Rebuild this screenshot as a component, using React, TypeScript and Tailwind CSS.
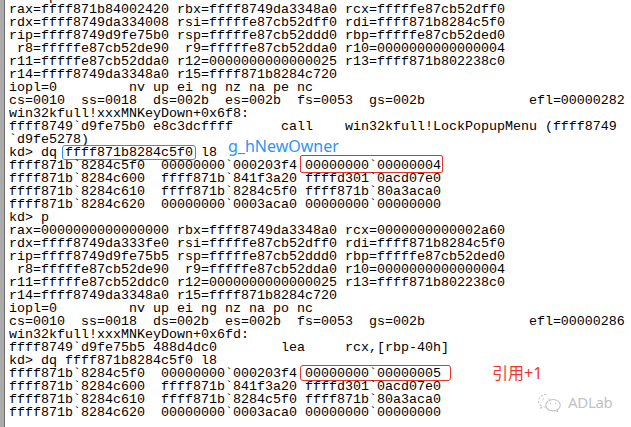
import React from "react";

const mono = { fontFamily: "'Liberation Mono', 'Courier New', monospace" };

const L = ({ children }: { children?: React.ReactNode }) => (
  <div className="relative h-[13px] leading-[13px] whitespace-pre text-black">{children}</div>
);

const regs1 = [
  "rax=ffff871b84002420 rbx=ffff8749da3348a0 rcx=fffffe87cb52dff0",
  "rdx=ffff8749da334008 rsi=fffffe87cb52dff0 rdi=ffff871b8284c5f0",
  "rip=ffff8749d9fe75b0 rsp=fffffe87cb52ddd0 rbp=fffffe87cb52ded0",
  " r8=fffffe87cb52de90  r9=fffffe87cb52dda0 r10=0000000000000004",
  "r11=fffffe87cb52dda0 r12=0000000000000025 r13=ffff871b802238c0",
  "r14=ffff8749da3348a0 r15=ffff871b8284c720",
  "iopl=0         nv up ei ng nz na pe nc",
  "cs=0010  ss=0018  ds=002b  es=002b  fs=0053  gs=002b             efl=00000282",
];

const regs2 = [
  "rax=0000000000000000 rbx=ffff8749da3348a0 rcx=0000000000002a60",
  "rdx=ffff8749da333fe0 rsi=fffffe87cb52dff0 rdi=ffff871b8284c5f0",
  "rip=ffff8749d9fe75b5 rsp=fffffe87cb52ddd0 rbp=fffffe87cb52ded0",
  " r8=fffffe87cb52de90  r9=fffffe87cb52dda0 r10=0000000000000004",
  "r11=fffffe87cb52ddc0 r12=0000000000000025 r13=ffff871b802238c0",
  "r14=ffff8749da3348a0 r15=ffff871b8284c720",
  "iopl=0         nv up ei ng nz na po nc",
  "cs=0010  ss=0018  ds=002b  es=002b  fs=0053  gs=002b             efl=00000286",
];

const dqRest = [
  "ffff871b`8284c600  ffff871b`841f3a20 ffffd301`0acd07e0",
  "ffff871b`8284c610  ffff871b`8284c5f0 ffff871b`80a3aca0",
  "ffff871b`8284c620  00000000`0003aca0 00000000`00000000",
];

function WeChatIcon() {
  return (
    <svg width="25" height="19" viewBox="0 0 25 19" fill="none" stroke="#c4c4c4" strokeWidth="1.1">
      <path d="M9.5 1.5c-4.4 0-8 2.9-8 6.4 0 2 1.1 3.7 2.8 4.9l-.7 2.2 2.6-1.4c1 .3 2.1.5 3.3.5" strokeDasharray="2.2 1.6" />
      <path d="M16 6.5c-4 0-7.2 2.6-7.2 5.7s3.2 5.7 7.2 5.7c.9 0 1.8-.1 2.6-.4l2.2 1.2-.6-1.9c1.8-1.1 3-2.7 3-4.6 0-3.1-3.2-5.7-7.2-5.7z" />
      <circle cx="6.5" cy="6" r=".8" fill="#c4c4c4" stroke="none" />
      <circle cx="12" cy="6" r=".8" fill="#c4c4c4" stroke="none" />
      <circle cx="13.5" cy="10.5" r=".7" fill="#c4c4c4" stroke="none" />
      <circle cx="18.5" cy="10.5" r=".7" fill="#c4c4c4" stroke="none" />
    </svg>
  );
}

export default function App() {
  return (
    <div className="w-[631px] h-[427px] overflow-hidden bg-white flex relative">
      <div className="w-[5px] shrink-0 bg-[#ababab] border-r border-[#6f6f6f]" />
      <div className="flex-1 pl-[4px] -mt-[10px] text-[13.33px]" style={mono}>
        <L>Breakpoint 1 hit</L>
        {regs1.map((r, i) => (
          <L key={"a" + i}>{r}</L>
        ))}
        <L>win32kfull!xxxMNKeyDown+0x6f8:</L>
        <L>{"ffff8749`d9fe75b0 e8c3dcffff      call    win32kfull!LockPopupMenu (ffff8749"}</L>
        <L>{"`d9fe5278)"}</L>
        <L>
          {"kd> dq "}
          <span className="relative">
            ffff871b8284c5f0
            <span className="absolute -left-[3px] -right-[3px] top-0 bottom-0 border border-[#2f8ff2] rounded-[3px]" />
          </span>
          {" l8"}
          <span
            className="absolute left-[219px] -top-[8px] leading-[16px] text-[16px] text-[#2f93f5]"
            style={{ fontFamily: "'Noto Sans', sans-serif" }}
          >
            g_hNewOwner
          </span>
        </L>
        <L>
          {"ffff871b`8284c5f0  00000000`000203f4 "}
          <span className="relative">
            {"00000000`00000004"}
            <span className="absolute -left-[5px] -right-[2px] -top-[3px] bottom-0 border border-[#e8322a] rounded-[2px]" />
          </span>
        </L>
        {dqRest.map((r, i) => (
          <L key={"b" + i}>{r}</L>
        ))}
        <L>{"kd> p"}</L>
        {regs2.map((r, i) => (
          <L key={"c" + i}>{r}</L>
        ))}
        <L>win32kfull!xxxMNKeyDown+0x6fd:</L>
        <L>{"ffff8749`d9fe75b5 488d4dc0        lea     rcx,[rbp-40h]"}</L>
        <L>{"kd> dq ffff871b8284c5f0 l8"}</L>
        <L>
          {"ffff871b`8284c5f0  00000000`000203f4 "}
          <span className="relative">
            {"00000000`00000005"}
            <span className="absolute -left-[5px] -right-[10px] -top-[1px] bottom-0 border border-[#e8322a] rounded-[3px]" />
          </span>
          <span
            className="absolute left-[483px] -top-[2px] leading-[16px] text-[16px] text-[#f2362b]"
            style={{ fontFamily: "'Noto Sans', 'Noto Sans CJK SC', sans-serif" }}
          >
            引用+1
          </span>
        </L>
        {dqRest.map((r, i) => (
          <L key={"d" + i}>{r}</L>
        ))}
      </div>
      <div className="absolute left-[537px] top-[391px] flex items-center gap-[6px]">
        <WeChatIcon />
        <span
          className="text-[15px] text-[#c2c2c2] tracking-[-0.3px]"
          style={{ fontFamily: "'Noto Sans', sans-serif" }}
        >
          ADLab
        </span>
      </div>
    </div>
  );
}
